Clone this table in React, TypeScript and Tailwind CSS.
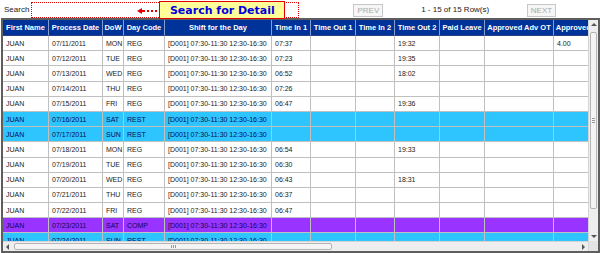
import React from "react";

type Row = {
  date: string;
  dow: string;
  code: string;
  in1?: string;
  out2?: string;
  ot?: string;
  tone?: "rest" | "comp";
};

const SHIFT = "[D001] 07:30-11:30 12:30-16:30";

const rows: Row[] = [
  { date: "07/11/2011", dow: "MON", code: "REG", in1: "07:37", out2: "19:32", ot: "4.00" },
  { date: "07/12/2011", dow: "TUE", code: "REG", in1: "07:23", out2: "19:35" },
  { date: "07/13/2011", dow: "WED", code: "REG", in1: "06:52", out2: "18:02" },
  { date: "07/14/2011", dow: "THU", code: "REG", in1: "07:26" },
  { date: "07/15/2011", dow: "FRI", code: "REG", in1: "06:47", out2: "19:36" },
  { date: "07/16/2011", dow: "SAT", code: "REST", tone: "rest" },
  { date: "07/17/2011", dow: "SUN", code: "REST", tone: "rest" },
  { date: "07/18/2011", dow: "MON", code: "REG", in1: "06:54", out2: "19:33" },
  { date: "07/19/2011", dow: "TUE", code: "REG", in1: "06:30" },
  { date: "07/20/2011", dow: "WED", code: "REG", in1: "06:43", out2: "18:31" },
  { date: "07/21/2011", dow: "THU", code: "REG", in1: "06:37" },
  { date: "07/22/2011", dow: "FRI", code: "REG", in1: "06:47" },
  { date: "07/23/2011", dow: "SAT", code: "COMP", tone: "comp" },
  { date: "07/24/2011", dow: "SUN", code: "REST", tone: "rest" },
];

const columns = [
  { label: "First Name", w: "w-[46px]" },
  { label: "Process Date", w: "w-[54px]" },
  { label: "DoW", w: "w-[21px]" },
  { label: "Day Code", w: "w-[41px]" },
  { label: "Shift for the Day", w: "w-[107px]" },
  { label: "Time In 1", w: "w-[39px]" },
  { label: "Time Out 1", w: "w-[45px]" },
  { label: "Time In 2", w: "w-[39px]" },
  { label: "Time Out 2", w: "w-[45px]" },
  { label: "Paid Leave", w: "w-[45px]" },
  { label: "Approved Adv OT", w: "w-[69px]" },
  { label: "Approved OT", w: "w-[52px]" },
];

const Arrow = ({ dir }: { dir: "up" | "down" | "left" | "right" }) => {
  const pts = {
    up: "1,5 4,2 7,5",
    down: "1,3 4,6 7,3",
    left: "5,1 2,4 5,7",
    right: "3,1 6,4 3,7",
  }[dir];
  return (
    <svg width="8" height="8" viewBox="0 0 8 8">
      <polygon points={pts} fill="#555" />
    </svg>
  );
};

const App = () => {
  return (
    <div className="w-[600px] h-[253px] bg-white overflow-hidden font-['Liberation_Sans',Arial,sans-serif] text-[#222]">
      {/* Search bar + pager */}
      <div className="h-[18px] flex items-start">
        <span className="ml-[4px] mt-[6px] text-[8px] leading-none text-[#222]">Search</span>
        <div className="relative ml-[2px] mt-[2px] w-[268px] h-[16px] border border-dotted border-[#e00000] z-10">
          <svg className="absolute left-[105px] top-[4px]" width="22" height="8" viewBox="0 0 22 8">
            <polygon points="0,4 5,1 5,7" fill="#e00000" />
            <rect x="5" y="3" width="3" height="2" fill="#e00000" />
            <rect x="10" y="3" width="2" height="2" fill="#e00000" />
            <rect x="14" y="3" width="2" height="2" fill="#e00000" />
            <rect x="18" y="3" width="2" height="2" fill="#e00000" />
          </svg>
          <div className="absolute left-[127px] top-[-2px] w-[126px] h-[18px] bg-[#ffff99] border border-[#e00000] flex items-center justify-center">
            <span className="font-['DejaVu_Sans',Verdana,sans-serif] font-bold text-[11px] leading-none text-[#0000dd]">
              Search for Detail
            </span>
          </div>
        </div>
        <button className="ml-[54px] mt-[4px] w-[30px] h-[13px] border border-[#c8c8c8] bg-[#f6f6f6] text-[8px] leading-none text-[#aaa]">
          PREV
        </button>
        <span className="flex-1 mt-[6px] text-center text-[8px] leading-none text-[#222]">1 - 15 of 15 Row(s)</span>
        <button className="mr-[44px] mt-[4px] w-[29px] h-[13px] border border-[#c8c8c8] bg-[#f6f6f6] text-[8px] leading-none text-[#aaa]">
          NEXT
        </button>
      </div>

      {/* Grid */}
      <div className="ml-[1px] w-[599px] h-[235px] border-2 border-[#5e5e5e] flex">
        <div className="w-[585px] flex flex-col">
          <div className="h-[221px] overflow-hidden">
            <table className="table-fixed border-separate border-spacing-0 w-[603px]">
              <thead>
                <tr>
                  {columns.map((c) => (
                    <th
                      key={c.label}
                      className={`${c.w} h-[16px] p-0 bg-[#003399] text-white font-bold text-[7.5px] leading-none text-center whitespace-nowrap overflow-hidden border-r border-b border-r-[#8a9ccf] border-b-[#2a3f80]`}
                    >
                      {c.label}
                    </th>
                  ))}
                </tr>
              </thead>
              <tbody>
                {rows.map((r) => {
                  const bg =
                    r.tone === "rest"
                      ? "bg-[#2ec5ff] text-[#0a0a55]"
                      : r.tone === "comp"
                        ? "bg-[#9933ff] text-[#0a0a55]"
                        : "bg-white text-[#222]";
                  const cells = ["JUAN", r.date, r.dow, r.code, SHIFT, r.in1 ?? "", "", "", r.out2 ?? "", "", "", r.ot ?? ""];
                  return (
                    <tr key={r.date} className={bg}>
                      {cells.map((v, i) => (
                        <td
                          key={i}
                          className="h-[15.2px] p-0 pl-[3px] text-[7px] leading-none whitespace-nowrap overflow-hidden border-r border-b border-[#c0c0c0]"
                        >
                          {v}
                        </td>
                      ))}
                    </tr>
                  );
                })}
              </tbody>
            </table>
          </div>
          {/* Horizontal scrollbar */}
          <div className="h-[10px] flex bg-[#eeeeee] border-t border-[#d4d4d4]">
            <div className="w-[10px] flex items-center justify-center">
              <Arrow dir="left" />
            </div>
            <div className="flex-1 flex items-stretch py-[1px] pl-[1px]">
              <div className="w-[318px] bg-[#f4f4f4] border border-[#b4b4b4] rounded-[2px] flex items-center justify-center">
                <div className="w-[5px] h-[3px] border-x border-[#999] flex justify-center">
                  <div className="w-px h-full bg-[#999]" />
                </div>
              </div>
            </div>
            <div className="w-[10px] flex items-center justify-center">
              <Arrow dir="right" />
            </div>
          </div>
        </div>
        {/* Vertical scrollbar */}
        <div className="w-[10px] flex flex-col bg-[#eeeeee] border-l border-[#d4d4d4]">
          <div className="h-[10px] flex items-center justify-center">
            <Arrow dir="up" />
          </div>
          <div className="flex-1 pt-[2px] px-[1px]">
            <div className="h-[177px] bg-[#f4f4f4] border border-[#b4b4b4] rounded-[2px] flex items-center justify-center">
              <div className="w-[3px] h-[5px] border-y border-[#999] flex items-center">
                <div className="h-px w-full bg-[#999]" />
              </div>
            </div>
          </div>
          <div className="h-[10px] flex items-center justify-center">
            <Arrow dir="down" />
          </div>
          <div className="h-[10px] bg-[#e4e4e4]" />
        </div>
      </div>
    </div>
  );
};

export default App;
